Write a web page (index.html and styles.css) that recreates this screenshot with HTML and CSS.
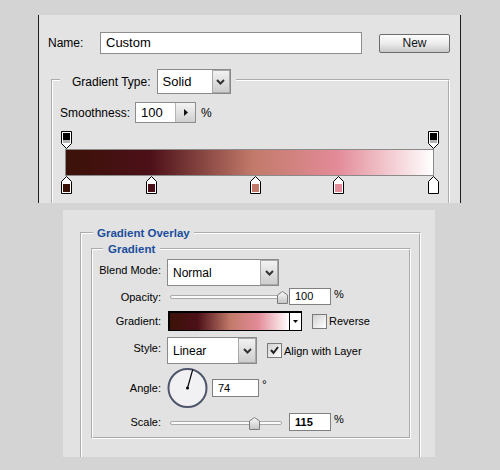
FILE: index.html
```html
<!DOCTYPE html>
<html lang="en">
<head>
    <meta charset="UTF-8">
    <title>Gradient Editor</title>
    <link rel="stylesheet" href="styles.css">
</head>
<body>
    <!-- Gradient editor dialog (top part) -->
    <div class="top-panel">
        <div class="name-row">
            <span class="name-label">Name:</span>
            <div class="name-input">Custom</div>
            <button class="btn-new">New</button>
        </div>

        <fieldset class="grad-box">
            <legend class="grad-legend">
                <div class="legend-row">
                    <span>Gradient Type:</span>
                    <div class="select select-type">
                        <span class="select-text">Solid</span>
                        <span class="select-arrow">
                            <svg width="9" height="6" viewBox="0 0 9 6"><polyline points="1,1 4.5,4.5 8,1" fill="none" stroke="#333" stroke-width="2"/></svg>
                        </span>
                    </div>
                </div>
            </legend>

            <div class="smooth-row">
                <span class="smooth-label">Smoothness:</span>
                <div class="spin">
                    <span class="spin-text">100</span>
                    <span class="spin-btn">
                        <svg width="4" height="7" viewBox="0 0 4 7"><path d="M0 0L4 3.5L0 7Z" fill="#111"/></svg>
                    </span>
                </div>
                <span class="unit">%</span>
            </div>

            <div class="editor">
                <div class="stops">
                    <svg class="stop" style="left: calc(0% - 5px)" width="11" height="18" viewBox="0 0 11 18"><path d="M0.5 0.5H10.5V12.5L5.5 17.5L0.5 12.5Z" fill="#fff" stroke="#000"/><rect x="2" y="2" width="7" height="7" fill="#000"/><rect x="2" y="9" width="7" height="3" fill="#b4b4b4"/></svg>
                    <svg class="stop" style="left: calc(100% - 5px)" width="11" height="18" viewBox="0 0 11 18"><path d="M0.5 0.5H10.5V12.5L5.5 17.5L0.5 12.5Z" fill="#fff" stroke="#000"/><rect x="2" y="2" width="7" height="7" fill="#000"/><rect x="2" y="9" width="7" height="3" fill="#b4b4b4"/></svg>
                </div>
                <div class="grad-bar grad-fill"></div>
                <div class="stops">
                    <svg class="stop" style="left: calc(0% - 5px)" width="11" height="18" viewBox="0 0 11 18"><path d="M5.5 0.5L10.5 5.5V17.5H0.5V5.5Z" fill="#fff" stroke="#000"/><rect x="2" y="8" width="7" height="8" fill="#3b1208"/></svg>
                    <svg class="stop" style="left: calc(23.2% - 5px)" width="11" height="18" viewBox="0 0 11 18"><path d="M5.5 0.5L10.5 5.5V17.5H0.5V5.5Z" fill="#fff" stroke="#000"/><rect x="2" y="8" width="7" height="8" fill="#4c1018"/></svg>
                    <svg class="stop" style="left: calc(51.4% - 5px)" width="11" height="18" viewBox="0 0 11 18"><path d="M5.5 0.5L10.5 5.5V17.5H0.5V5.5Z" fill="#fff" stroke="#000"/><rect x="2" y="8" width="7" height="8" fill="#c27a6a"/></svg>
                    <svg class="stop" style="left: calc(74% - 5px)" width="11" height="18" viewBox="0 0 11 18"><path d="M5.5 0.5L10.5 5.5V17.5H0.5V5.5Z" fill="#fff" stroke="#000"/><rect x="2" y="8" width="7" height="8" fill="#e38b98"/></svg>
                    <svg class="stop" style="left: calc(100% - 5px)" width="11" height="18" viewBox="0 0 11 18"><path d="M5.5 0.5L10.5 5.5V17.5H0.5V5.5Z" fill="#fff" stroke="#000"/><rect x="2" y="8" width="7" height="8" fill="#fff"/></svg>
                </div>
            </div>
        </fieldset>
    </div>

    <!-- Layer style: gradient overlay -->
    <div class="fx-panel">
        <fieldset class="outer-box">
            <legend class="outer-legend">Gradient Overlay</legend>
            <fieldset class="inner-box">
                <legend class="inner-legend">Gradient</legend>

                <div class="row row-blend">
                    <span class="row-label label-up">Blend Mode:</span>
                    <div class="select select-blend">
                        <span class="select-text">Normal</span>
                        <span class="select-arrow">
                            <svg width="9" height="6" viewBox="0 0 9 6"><polyline points="1,1 4.5,4.5 8,1" fill="none" stroke="#333" stroke-width="2"/></svg>
                        </span>
                    </div>
                </div>

                <div class="row row-opacity">
                    <span class="row-label">Opacity:</span>
                    <div class="slider">
                        <div class="slider-track"></div>
                        <svg class="slider-thumb" style="left: calc(100% - 5px)" width="11" height="13" viewBox="0 0 11 13"><defs><linearGradient id="th1" x1="0" y1="0" x2="0" y2="1"><stop offset="0" stop-color="#fafafa"/><stop offset="1" stop-color="#c4c4c4"/></linearGradient></defs><path d="M5.5 0.5L10.5 4V12.5H0.5V4Z" fill="url(#th1)" stroke="#7c7c7c"/></svg>
                    </div>
                    <div class="num-input">100</div>
                    <span class="unit">%</span>
                </div>

                <div class="row row-gradient">
                    <span class="row-label">Gradient:</span>
                    <div class="swatch">
                        <div class="swatch-fill grad-fill"></div>
                        <div class="swatch-arrow">
                            <svg width="5" height="3" viewBox="0 0 5 3"><path d="M0 0H5L2.5 3Z" fill="#000"/></svg>
                        </div>
                    </div>
                    <span class="checkbox check-reverse"></span>
                    <span class="check-text">Reverse</span>
                </div>

                <div class="row row-style">
                    <span class="row-label label-up">Style:</span>
                    <div class="select select-style">
                        <span class="select-text">Linear</span>
                        <span class="select-arrow">
                            <svg width="9" height="6" viewBox="0 0 9 6"><polyline points="1,1 4.5,4.5 8,1" fill="none" stroke="#333" stroke-width="2"/></svg>
                        </span>
                    </div>
                    <span class="checkbox check-align">
                        <svg width="11" height="11" viewBox="0 0 11 11"><polyline points="2,5 4.5,8 9,2" fill="none" stroke="#222" stroke-width="2"/></svg>
                    </span>
                    <span class="check-text">Align with Layer</span>
                </div>

                <div class="row row-angle">
                    <span class="row-label">Angle:</span>
                    <svg class="dial" width="42" height="42" viewBox="0 0 42 42">
                        <circle cx="20.5" cy="21" r="19" fill="#f1f1f3" stroke="#4f566c" stroke-width="2"/>
                        <line x1="20.5" y1="21" x2="25.7" y2="2.7" stroke="#000" stroke-width="1.2"/>
                        <circle cx="20.5" cy="21" r="1.5" fill="#000"/>
                    </svg>
                    <div class="num-input angle-input">74</div>
                    <span class="degree">°</span>
                </div>

                <div class="row row-scale">
                    <span class="row-label">Scale:</span>
                    <div class="slider">
                        <div class="slider-track"></div>
                        <svg class="slider-thumb" style="left: calc(75% - 5px)" width="11" height="13" viewBox="0 0 11 13"><defs><linearGradient id="th2" x1="0" y1="0" x2="0" y2="1"><stop offset="0" stop-color="#fafafa"/><stop offset="1" stop-color="#c4c4c4"/></linearGradient></defs><path d="M5.5 0.5L10.5 4V12.5H0.5V4Z" fill="url(#th2)" stroke="#7c7c7c"/></svg>
                    </div>
                    <div class="num-input scale-input">115</div>
                    <span class="unit">%</span>
                </div>
            </fieldset>
        </fieldset>
    </div>
</body>
</html>
```

FILE: styles.css
```css
/* Reset */
* {
    margin: 0;
    padding: 0;
    box-sizing: border-box;
}

body {
    font-family: "Liberation Sans", Arial, sans-serif;
    background-color: #d4d4d4;
    color: #000;
    width: 500px;
    height: 470px;
    overflow: hidden;
}

/* Shared gradient colours */
.grad-fill {
    background: linear-gradient(to right, #3b1208 0%, #4c1018 23%, #c27a6a 51%, #e38b98 74%, #ffffff 100%);
}

/* Top panel: gradient editor */
.top-panel {
    margin: 15px 0 0 38px;
    width: 423px;
    height: 188px;
    background-color: #e3e3e3;
    border-left: 1px solid #1e1e1e;
    border-right: 1px solid #1e1e1e;
    overflow: hidden;
    font-size: 12px;
}

.name-row {
    display: flex;
    align-items: center;
    padding: 17px 0 0 9px;
}

.name-label {
    width: 52px;
}

.name-input {
    width: 262px;
    height: 22px;
    line-height: 20px;
    padding-left: 5px;
    background-color: #fff;
    border: 1px solid #8d8d8d;
    font-size: 13px;
}

.btn-new {
    margin-left: 17px;
    width: 71px;
    height: 19px;
    font-family: inherit;
    font-size: 12px;
    color: #111;
    border: 1px solid #6c6c6c;
    border-radius: 2px;
    background: linear-gradient(#fdfdfd, #ececec 50%, #c8c8c8);
}

.grad-box {
    margin: 11px 0 0 12px;
    width: 399px;
    border: 2px groove #fff;
    padding: 0 0 30px 7px;
}

.grad-legend {
    padding: 4px 5px 0 12px;
}

.legend-row {
    display: flex;
    align-items: center;
}

/* Drop-down boxes */
.select {
    display: flex;
    background-color: #fff;
    border: 1px solid #8a8a8a;
}

.select-text {
    flex: 1;
    display: flex;
    align-items: center;
    padding-left: 5px;
}

.select-arrow {
    width: 18px;
    display: flex;
    align-items: center;
    justify-content: center;
    border: 1px solid #a9a9a9;
    background: linear-gradient(#f2f2f2, #cdcdcd);
}

.select-type {
    margin-left: 6px;
    width: 74px;
    height: 25px;
    font-size: 13px;
}

.smooth-row {
    display: flex;
    align-items: center;
    margin-top: 8px;
}

.smooth-label {
    width: 75px;
}

.spin {
    display: flex;
    width: 61px;
    height: 21px;
    background-color: #fff;
    border: 1px solid #8d8d8d;
    font-size: 13px;
}

.spin-text {
    flex: 1;
    display: flex;
    align-items: center;
    padding-left: 5px;
}

.spin-btn {
    width: 20px;
    display: flex;
    align-items: center;
    justify-content: center;
    border-left: 1px solid #b5b5b5;
    background: linear-gradient(#f4f4f4, #cfcfcf);
}

.unit {
    margin-left: 5px;
}

.editor {
    margin-top: 8px;
    padding-left: 5px;
}

.stops {
    position: relative;
    margin-left: 1px;
    width: 367px;
    height: 18px;
}

.stop {
    position: absolute;
    top: 0;
    display: block;
}

.grad-bar {
    width: 369px;
    height: 27px;
    border: 1px solid #8a8a8a;
}

/* Bottom panel: layer style */
.fx-panel {
    margin: 7px 0 0 63px;
    width: 372px;
    height: 247px;
    background-color: #e2e2e2;
    overflow: hidden;
    font-size: 11px;
}

.outer-box {
    margin: 16px 0 0 17px;
    width: 341px;
    border: 2px groove #fff;
    padding: 2px 0 40px 9px;
}

.outer-legend,
.inner-legend {
    font-size: 11.5px;
    font-weight: bold;
    color: #1c4e9c;
    line-height: 14px;
}

.outer-legend {
    margin-left: 2px;
    padding: 0 4px;
}

.inner-legend {
    margin-left: 10px;
    padding: 0 5px;
}

.inner-box {
    width: 320px;
    border: 2px groove #fff;
    padding: 3px 0 6px 0;
}

.row {
    display: flex;
    align-items: center;
}

.row-label {
    width: 68px;
    margin-right: 6px;
    text-align: right;
}

.label-up {
    padding-bottom: 5px;
}

.row-blend { height: 27px; }
.row-opacity { height: 17px; margin-top: 2px; }
.row-gradient { height: 20px; margin-top: 6px; }
.row-style { height: 27px; margin-top: 6px; }
.row-angle { height: 42px; margin-top: 3px; }
.row-scale { height: 18px; margin-top: 4px; }

.select-blend {
    width: 112px;
    height: 27px;
    font-size: 12px;
}

.select-style {
    width: 90px;
    height: 27px;
    font-size: 12px;
}

.slider {
    position: relative;
    width: 112px;
    height: 17px;
    margin-left: 3px;
}

.slider-track {
    position: absolute;
    left: 0;
    right: 0;
    top: 7px;
    height: 4px;
    background-color: #fbfbfb;
    border: 1px solid #a9a9a9;
    border-radius: 2px;
}

.slider-thumb {
    position: absolute;
    top: 3px;
    display: block;
}

.num-input {
    margin-left: 7px;
    width: 42px;
    height: 17px;
    line-height: 15px;
    padding-left: 5px;
    background-color: #fff;
    border: 1px solid #808080;
    font-size: 11px;
}

.scale-input {
    height: 18px;
    line-height: 16px;
    font-weight: bold;
}

.row-opacity .unit,
.row-scale .unit {
    margin-left: 3px;
    align-self: flex-start;
}

.swatch {
    display: flex;
    margin-left: 1px;
    width: 134px;
    height: 20px;
    background-color: #fff;
    border: 1px solid #000;
    border-top-width: 2px;
    border-left-width: 2px;
}

.swatch-fill {
    width: 120px;
    border-right: 1px solid #000;
}

.swatch-arrow {
    flex: 1;
    display: flex;
    align-items: center;
    justify-content: center;
}

.checkbox {
    display: flex;
    align-items: center;
    justify-content: center;
    width: 15px;
    height: 15px;
    border: 1px solid #7a7a7a;
    background: linear-gradient(135deg, #d2d2d2, #ffffff);
}

.check-reverse {
    margin-left: 10px;
}

.check-align {
    margin-left: 10px;
}

.check-text {
    margin-left: 2px;
}

.dial {
    display: block;
}

.angle-input {
    margin-left: 3px;
    width: 47px;
    height: 18px;
    line-height: 16px;
}

.degree {
    align-self: flex-start;
    margin: 11px 0 0 3px;
    font-size: 12px;
}
```
